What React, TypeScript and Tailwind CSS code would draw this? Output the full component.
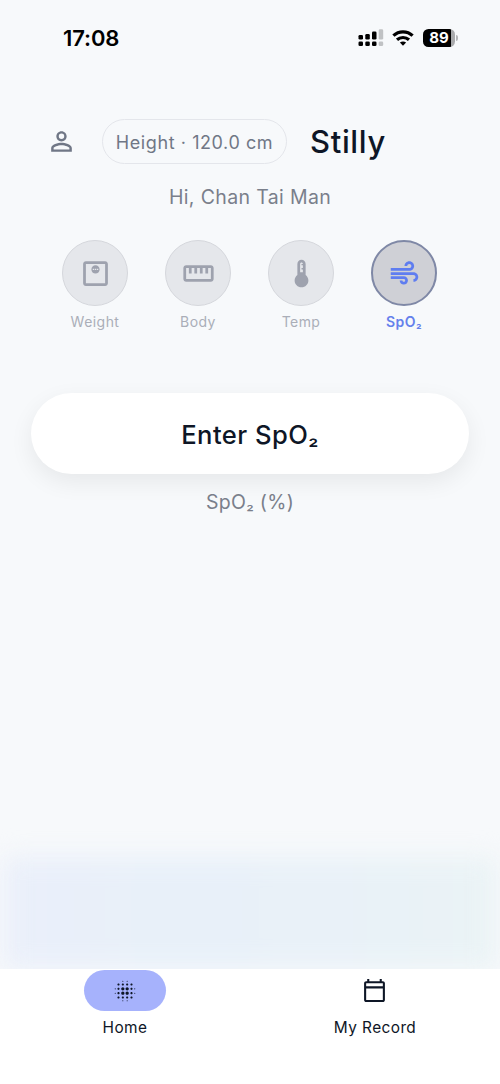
import { useState } from 'react';
import type { ReactNode } from 'react';
import type { IconType } from 'react-icons';
import {
  MdAir,
  MdBlurOn,
  MdDeviceThermostat,
  MdOutlineMonitorWeight,
  MdPersonOutline,
  MdStraighten,
} from 'react-icons/md';

type Metric = { id: string; label: ReactNode; icon: IconType };

function SpO2() {
  return (
    <>
      SpO<span className="text-[0.88em]">₂</span>
    </>
  );
}

const metrics: Metric[] = [
  { id: 'weight', label: 'Weight', icon: MdOutlineMonitorWeight },
  { id: 'body', label: 'Body', icon: MdStraighten },
  { id: 'temp', label: 'Temp', icon: MdDeviceThermostat },
  { id: 'spo2', label: <SpO2 />, icon: MdAir },
];

function StatusBar() {
  return (
    <div className="flex h-[75px] items-center justify-between pr-[42px] pl-[63px] text-black">
      <span className="text-[22px] leading-none font-semibold tracking-[-0.1px]">17:08</span>
      <div className="flex items-center">
        <svg width="26" height="18" viewBox="0 0 26 18" fill="currentColor">
          <rect x="0.5" y="6" width="4.5" height="4.5" rx="1.3" />
          <rect x="7.3" y="5" width="4.5" height="5.5" rx="1.3" />
          <rect x="14" y="2.5" width="4.5" height="8" rx="1.3" />
          <rect x="0.5" y="12.5" width="4.5" height="4.5" rx="1.3" />
          <rect x="7.3" y="12.5" width="4.5" height="4.5" rx="1.3" />
          <rect x="14" y="12.5" width="4.5" height="4.5" rx="1.3" />
          <rect x="20.7" y="0.2" width="4.5" height="10.3" rx="1.3" opacity="0.22" />
          <rect x="20.7" y="12.5" width="4.5" height="4.5" rx="1.3" opacity="0.22" />
        </svg>
        <svg className="ml-[8px]" width="22" height="16" viewBox="0 0 22 16" fill="none" stroke="currentColor" strokeWidth="3.2">
          <path d="M1.4 5.6C6.8 0.5 15.2 0.5 20.6 5.6" />
          <path d="M5 9.8c3.4-3.1 8.6-3.1 12 0" />
          <path d="M11 15.8 7.9 12.6c1.8-1.5 4.4-1.5 6.2 0z" fill="currentColor" stroke="none" />
        </svg>
        <div className="ml-[9px] flex h-[18px] w-[32px] items-center justify-center rounded-[5.5px] bg-[linear-gradient(90deg,#000_89%,#a9aaac_89%)] text-[15px] leading-none font-bold text-white">
          89
        </div>
        <div className="ml-[1px] h-[6px] w-[2px] rounded-r-full bg-[#b4b5b7]" />
      </div>
    </div>
  );
}

function CalendarIcon() {
  return (
    <svg className="mr-px" width="25" height="25" viewBox="0 0 24 24" fill="currentColor">
      <path d="M20 3h-1V1h-2v2H7V1H5v2H4c-1.1 0-2 .9-2 2v16c0 1.1.9 2 2 2h16c1.1 0 2-.9 2-2V5c0-1.1-.9-2-2-2zm0 18H4V10h16v11zm0-13H4V5h16v3z" />
    </svg>
  );
}

export default function App() {
  const [active, setActive] = useState('spo2');

  return (
    <div className="flex h-[1084px] w-[500px] flex-col overflow-hidden bg-[#f7f9fb] font-['Inter',sans-serif] text-[#0e1626]">
      <StatusBar />

      <header className="mt-[44px] flex h-[45px] items-center pl-[46px]">
        <MdPersonOutline size={31} className="text-[#707786]" />
        <div className="ml-[25px] flex h-[45px] w-[185px] items-center justify-center rounded-full border border-[#e4e6eb] pt-[2px] text-[18px] tracking-[0.58px] whitespace-nowrap text-[#707786]">
          Height · 120.0 cm
        </div>
        <h1 className="ml-[23px] text-[31px] leading-none font-medium tracking-[0.65px]">Stilly</h1>
      </header>

      <p className="mt-[19px] text-center text-[19.5px] leading-[28px] tracking-[0.36px] text-[#7a7f8b]">Hi, Chan Tai Man</p>

      <div className="mt-[29.4px] flex justify-center gap-[37px] pr-[1px]">
        {metrics.map(({ id, label, icon: Icon }) => {
          const on = id === active;
          return (
            <button key={id} onClick={() => setActive(id)} className="flex w-[66px] flex-col items-center">
              <span
                className={`flex h-[66px] w-[66px] items-center justify-center rounded-full ${
                  on ? 'border-[2.5px] border-[#7f88a6] bg-[#cfd0d6] text-[#5f7df0]' : 'border border-[#d5d7dc] bg-[#e5e7eb] text-[#9ea2ae]'
                }`}
              >
                <Icon size={33} />
              </span>
              <span
                className={`mt-[6px] h-[20px] text-[14px] leading-[20px] tracking-[0.45px] ${
                  on ? 'font-semibold text-[#6580ec]' : 'text-[#aaaeb8]'
                }`}
              >
                {label}
              </span>
            </button>
          );
        })}
      </div>

      <button className="mx-[31px] mt-[60.6px] h-[81px] shrink-0 rounded-full bg-white pt-[3px] text-[25.6px] font-medium tracking-[0.45px] shadow-[0_8px_23px_rgba(0,0,0,0.07)]">
        Enter <SpO2 />
      </button>
      <p className="mt-[14px] text-center text-[19.5px] leading-[28px] tracking-[0.3px] text-[#7a7f8b]">
        <SpO2 /> (%)
      </p>

      <div className="mt-auto h-[150px] shrink-0 overflow-hidden pt-[38px]">
        <div className="mx-[4px] h-[112px] bg-[linear-gradient(90deg,#eaeffa,#e8f0f9_35%,#e9f1f8_65%,#eaf3f5)] blur-[12px]" />
      </div>

      <nav className="grid h-[115px] shrink-0 grid-cols-2 bg-white pt-px text-[15.4px] tracking-[0.42px]">
        <div className="flex flex-col items-center">
          <div className="flex h-[41px] w-[82px] items-center justify-center rounded-full bg-[#a6b2fc]">
            <MdBlurOn size={26} />
          </div>
          <span className="mt-[7px] leading-[20px]">Home</span>
        </div>
        <div className="flex flex-col items-center">
          <div className="flex h-[41px] items-center">
            <CalendarIcon />
          </div>
          <span className="mt-[7px] leading-[20px]">My Record</span>
        </div>
      </nav>
    </div>
  );
}
